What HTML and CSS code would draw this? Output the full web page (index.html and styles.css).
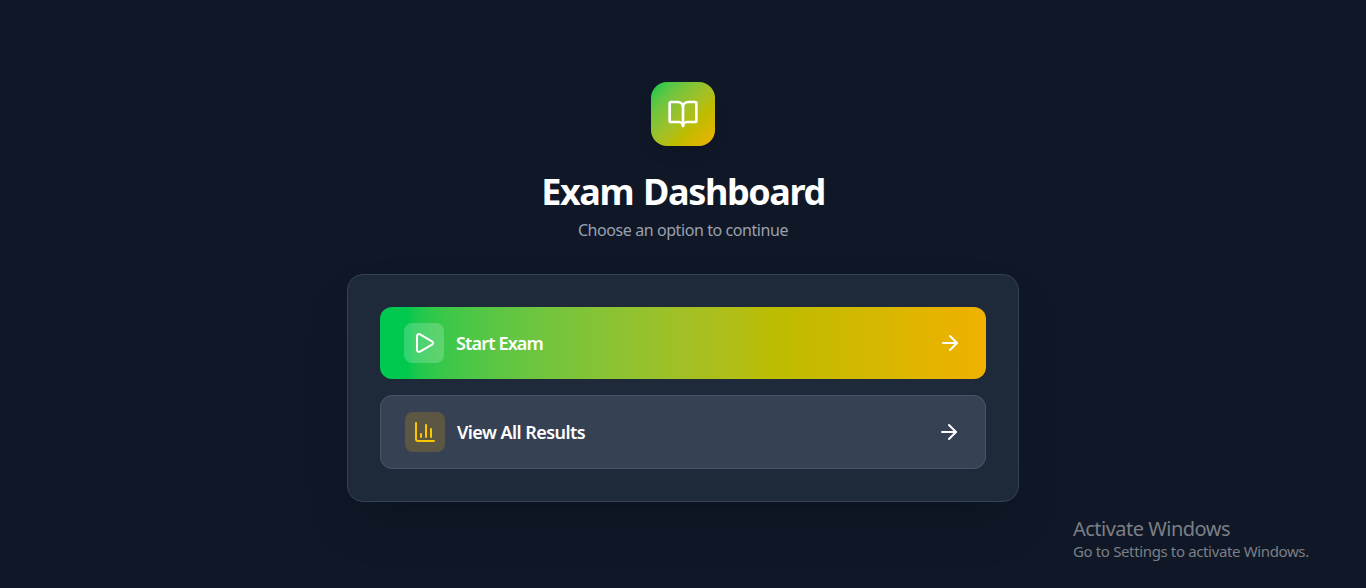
FILE: index.html
```html
<!DOCTYPE html>
<html lang="en">
<head>
<meta charset="utf-8">
<title>Exam Dashboard</title>
<link rel="stylesheet" href="styles.css">
</head>
<body>
<main class="page">
  <header class="header">
    <div class="logo">
      <svg class="icon icon-lg" viewBox="0 0 24 24"><path d="M12 7v14"/><path d="M3 18a1 1 0 0 1-1-1V4a1 1 0 0 1 1-1h5a4 4 0 0 1 4 4 4 4 0 0 1 4-4h5a1 1 0 0 1 1 1v13a1 1 0 0 1-1 1h-6a3 3 0 0 0-3 3 3 3 0 0 0-3-3z"/></svg>
    </div>
    <h1 class="title">Exam Dashboard</h1>
    <p class="subtitle">Choose an option to continue</p>
  </header>
  <section class="card">
    <button class="action action-primary">
      <span class="tile"><svg class="icon" viewBox="0 0 24 24"><path d="M5 5a2 2 0 0 1 3.008-1.728l11.997 6.998a2 2 0 0 1 .003 3.458l-12 7A2 2 0 0 1 5 19z"/></svg></span>
      <span class="label label-start">Start Exam</span>
      <svg class="icon arrow" viewBox="0 0 24 24"><path d="M5 12h14"/><path d="m12 5 7 7-7 7"/></svg>
    </button>
    <button class="action action-secondary">
      <span class="tile tile-yellow"><svg class="icon" viewBox="0 0 24 24"><path d="M3 3v16a2 2 0 0 0 2 2h16"/><path d="M18 17V9"/><path d="M13 17V5"/><path d="M8 17v-3"/></svg></span>
      <span class="label label-results">View All Results</span>
      <svg class="icon arrow" viewBox="0 0 24 24"><path d="M5 12h14"/><path d="m12 5 7 7-7 7"/></svg>
    </button>
  </section>
</main>
<aside class="watermark">
  <div class="watermark-title">Activate Windows</div>
  <div class="watermark-text">Go to Settings to activate Windows.</div>
</aside>
</body>
</html>
```
FILE: styles.css
```css
* { box-sizing: border-box; margin: 0; padding: 0; }
body {
  background: #101828;
  font-family: "Segoe UI", "Noto Sans", "Open Sans", sans-serif;
  color: #fff;
  overflow: hidden;
}
.page {
  height: 588px;
  padding-top: 82px;
  display: flex;
  flex-direction: column;
  align-items: center;
}
.header {
  height: 192px;
  display: flex;
  flex-direction: column;
  align-items: center;
}
.logo {
  width: 64px;
  height: 64px;
  border-radius: 16px;
  display: flex;
  align-items: center;
  justify-content: center;
  background: linear-gradient(to bottom right in oklab, oklch(72.3% .219 149.579), oklch(79.5% .184 86.047));
  box-shadow: 0 10px 15px -3px rgb(0 0 0 / .1), 0 4px 6px -4px rgb(0 0 0 / .1);
}
.icon {
  width: 24px;
  height: 24px;
  flex: none;
  display: block;
  fill: none;
  stroke: currentColor;
  stroke-width: 2;
  stroke-linecap: round;
  stroke-linejoin: round;
}
.icon-lg { width: 32px; height: 32px; }
.title {
  margin-top: 26px;
  font-size: 36px;
  line-height: 40px;
  font-weight: 700;
  letter-spacing: -1.4px;
  word-spacing: 2px;
  white-space: nowrap;
}
.subtitle {
  margin-top: 6px;
  font-size: 16px;
  line-height: 24px;
  letter-spacing: -.42px;
  color: #99a1af;
  white-space: nowrap;
}
.card {
  width: 672px;
  height: 228px;
  padding: 32px;
  border: 1px solid #364153;
  border-radius: 16px;
  background: #1e2939;
  box-shadow: 0 25px 50px -12px rgb(0 0 0 / .25);
  display: flex;
  flex-direction: column;
  gap: 16px;
}
.action {
  display: flex;
  align-items: center;
  gap: 12px;
  padding: 16px 24px;
  border: 0;
  border-radius: 12px;
  color: #fff;
  font-family: inherit;
}
.action-primary {
  height: 72px;
  background: linear-gradient(to right in oklab, oklch(72.3% .219 149.579), oklch(79.5% .184 86.047));
}
.action-secondary {
  height: 74px;
  border: 1px solid #4a5565;
  background: #364153;
}
.tile {
  width: 40px;
  height: 40px;
  border-radius: 8px;
  display: flex;
  align-items: center;
  justify-content: center;
  background: rgb(255 255 255 / .2);
}
.tile-yellow { background: rgb(240 177 0 / .2); color: #fdc700; }
.label {
  font-size: 18px;
  line-height: 28px;
  font-weight: 600;
  white-space: nowrap;
}
.label-start { letter-spacing: -.85px; }
.label-results { letter-spacing: -.55px; }
.arrow { margin-left: auto; }
.watermark {
  position: absolute;
  left: 1073px;
  top: 515px;
  color: #7c7f85;
  white-space: nowrap;
}
.watermark-title { font-size: 20px; line-height: 27px; letter-spacing: -.52px; }
.watermark-text { font-size: 15px; line-height: 18px; letter-spacing: -.36px; }
```
